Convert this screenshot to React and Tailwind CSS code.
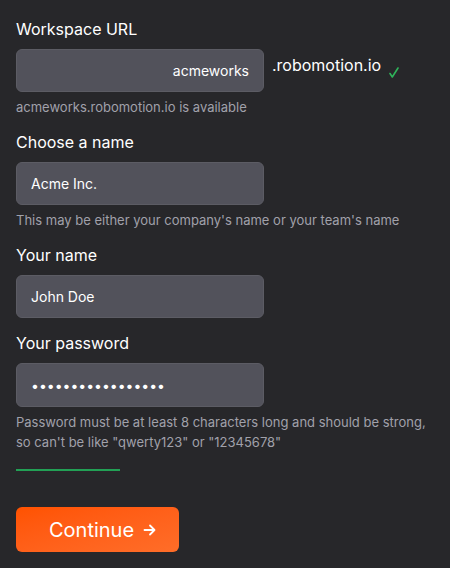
import React, { useState } from "react";

const font = { fontFamily: "Inter, 'Noto Sans', sans-serif" };

function Field({ label, children, help }) {
  return (
    <div className="flex flex-col">
      <label className="text-[16px] leading-5 text-white">{label}</label>
      <div className="mt-[10px]">{children}</div>
      {help && <p className="mt-[5px] text-[13px] leading-5 text-[#a1a1aa]">{help}</p>}
    </div>
  );
}

export default function App() {
  const [workspace, setWorkspace] = useState("acmeworks");
  const [company, setCompany] = useState("Acme Inc.");
  const [name, setName] = useState("John Doe");
  const [password, setPassword] = useState("supersecretpass12");

  const inputCls =
    "w-[248px] h-[43px] rounded-md border border-[#5c5c64] bg-[#52525b] px-[14px] text-[14px] text-white outline-none";

  return (
    <div style={font} className="min-h-[568px] w-[450px] bg-[#27272a] px-4 pt-[19px]">
      <Field label="Workspace URL" help="acmeworks.robomotion.io is available">
        <div className="flex items-start">
          <input
            value={workspace}
            onChange={e => setWorkspace(e.target.value)}
            className={inputCls + " text-right"}
          />
          <span className="ml-[8px] mt-[6px] text-[16px] leading-5 text-white">.robomotion.io</span>
          <svg className="ml-[8px] mt-[18px] h-[11px] w-[10px]" viewBox="0 0 10 11" fill="none" stroke="#2fb35a" strokeWidth="1.6" strokeLinecap="round" strokeLinejoin="round">
            <path d="M1 6.5 L3.3 10 L9 1" />
          </svg>
        </div>
      </Field>

      <div className="mt-[15px]">
        <Field label="Choose a name" help="This may be either your company's name or your team's name">
          <input value={company} onChange={e => setCompany(e.target.value)} className={inputCls} />
        </Field>
      </div>

      <div className="mt-[15px]">
        <Field label="Your name">
          <input value={name} onChange={e => setName(e.target.value)} className={inputCls} />
        </Field>
      </div>

      <div className="mt-[15px]">
        <Field
          label="Your password"
          help={`Password must be at least 8 characters long and should be strong, so can't be like "qwerty123" or "12345678"`}
        >
          <input
            type="password"
            value={password}
            onChange={e => setPassword(e.target.value)}
            className={inputCls + " h-[44px]"}
          />
        </Field>
      </div>

      {/* strength meter */}
      <div className="mt-[17px] h-[2px] w-[104px] bg-[#22a055]" />

      <button className="mt-[36px] flex h-[45px] w-[163px] items-center gap-[9px] rounded-md bg-gradient-to-br from-[#ff5200] to-[#ff6d28] pl-[33px] text-[20px] leading-6 text-white">
        Continue
        <svg className="h-[14px] w-[13px]" viewBox="0 0 13 14" fill="none" stroke="currentColor" strokeWidth="1.8" strokeLinecap="round" strokeLinejoin="round">
          <path d="M1.5 7h10M7 2.5 11.5 7 7 11.5" />
        </svg>
      </button>
    </div>
  );
}
